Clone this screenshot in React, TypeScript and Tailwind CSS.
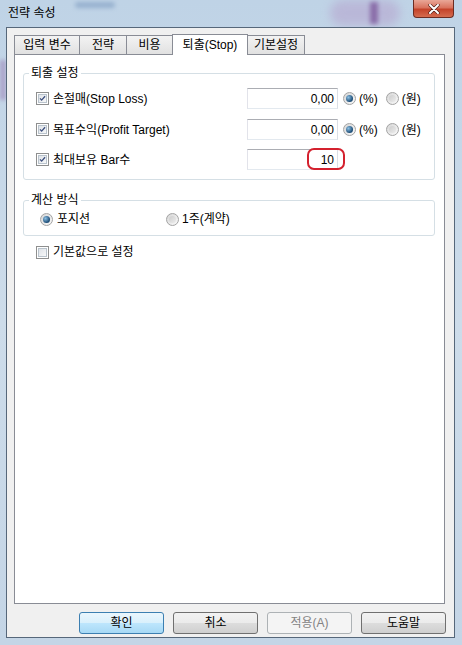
function CheckBox({ checked }: { checked?: boolean }) {
  return (
    <span className="w-[13px] h-[13px] border border-[#8e8f8f] bg-white flex items-center justify-center shrink-0">
      <span className="w-[9px] h-[9px] border border-[#b9c3cc] bg-gradient-to-br from-[#dfe3e8] to-[#f7f8f9] flex items-center justify-center">
        {checked && (
          <svg width="9" height="9" viewBox="0 0 9 9">
            <path d="M1.3 4.3 L3.4 6.6 L7.8 1.6" stroke="#3d4f7e" strokeWidth="1.7" fill="none" />
          </svg>
        )}
      </span>
    </span>
  );
}

function Radio({ checked }: { checked?: boolean }) {
  return (
    <span className="w-[13px] h-[13px] rounded-full border border-[#a3a3a3] bg-gradient-to-br from-[#d6d6d6] to-[#fafafa] flex items-center justify-center shrink-0">
      {checked ? (
        <span className="w-[7px] h-[7px] rounded-full bg-[radial-gradient(circle_at_35%_35%,#8cc0e4,#1a4a74_70%)]" />
      ) : (
        <span className="w-[7px] h-[7px] rounded-full bg-gradient-to-br from-[#cdcdcd] to-[#ececec]" />
      )}
    </span>
  );
}

function Tab({ label, width, active }: { label: string; width: string; active?: boolean }) {
  if (active) {
    return (
      <div className={`${width} h-[21px] -ml-px -mb-px relative z-10 border border-b-0 border-[#898c95] bg-white flex items-center justify-center`}>
        {label}
      </div>
    );
  }
  return (
    <div className={`${width} h-[19px] -ml-px first:ml-0 border border-b-0 border-[#898c95] bg-gradient-to-b from-[#f3f3f3] to-[#e1e1e1] flex items-center justify-center`}>
      {label}
    </div>
  );
}

function NumBox({ value }: { value: string }) {
  return (
    <div className="w-[91px] h-[21px] border border-[#abadb3] border-l-[#e2e3ea] border-b-[#e3e9ef] border-r-[#dbdfe6] bg-white flex items-center justify-end pr-[3px]">
      {value}
    </div>
  );
}

function Button({ label, focus, disabled }: { label: string; focus?: boolean; disabled?: boolean }) {
  if (disabled) {
    return (
      <div className="w-[85px] h-[22px] rounded-[3px] border border-[#adb2b5] bg-[#f4f4f4] text-[#838383] flex items-center justify-center">
        {label}
      </div>
    );
  }
  if (focus) {
    return (
      <div className="w-[85px] h-[22px] rounded-[3px] border border-[#3c7fb1] bg-[linear-gradient(#eaf6fd_0%,#d9f0fc_50%,#bee6fd_50%,#a7d9f5_100%)] flex items-center justify-center">
        {label}
      </div>
    );
  }
  return (
    <div className="w-[85px] h-[22px] rounded-[3px] border border-[#707070] bg-[linear-gradient(#f2f2f2_0%,#ebebeb_50%,#dddddd_50%,#cfcfcf_100%)] flex items-center justify-center">
      {label}
    </div>
  );
}

export default function App() {
  return (
    <div className="w-[462px] h-[645px] flex flex-col relative overflow-hidden bg-gradient-to-b from-[#bfd3e6] via-[#cddcea] to-[#c4d5e6] text-[12px] text-black font-['Liberation_Sans','Noto_Sans_CJK_KR',sans-serif] leading-[14px]">
      {/* glass smudges */}
      <div className="absolute left-[75px] top-[2px] w-[40px] h-[6px] rounded-full bg-[#6f8fb8] opacity-50 blur-[2px]" />
      <div className="absolute left-[330px] top-[0px] w-[70px] h-[26px] rounded-full bg-[#b6a6cf] opacity-60 blur-[5px]" />
      <div className="absolute left-[370px] top-[2px] w-[8px] h-[22px] bg-[#6b3d8a] opacity-60 blur-[2px]" />
      <div className="absolute left-[0px] top-[60px] w-[6px] h-[40px] bg-[#9a7fb5] opacity-60 blur-[2px]" />

      {/* Title bar */}
      <div className="h-[27px] flex items-start justify-between pl-[8px] pr-[8px] relative">
        <span className="mt-[6px]">전략 속성</span>
        <div className="w-[41px] h-[18px] rounded-b-[4px] border border-t-0 border-[#6c2c22] bg-[linear-gradient(#e9a797_0%,#d9735e_45%,#c4432a_55%,#d56c4f_100%)] flex items-center justify-center">
          <svg width="12" height="10" viewBox="0 0 12 10">
            <path d="M2 1 L10 9 M10 1 L2 9" stroke="#4a1a12" strokeWidth="3.2" strokeLinecap="round" />
            <path d="M2 1 L10 9 M10 1 L2 9" stroke="#ffffff" strokeWidth="2" strokeLinecap="round" />
          </svg>
        </div>
      </div>

      {/* Client area */}
      <div className="flex-1 ml-[6px] mr-[7px] mb-[7px] border border-[#56677a] bg-[#f0f0f0] flex flex-col pl-[7px] pr-[9px] pt-[5px] relative">
        {/* Tabs */}
        <div className="flex items-end h-[21px]">
          <Tab label="입력 변수" width="w-[66px]" />
          <Tab label="전략" width="w-[48px]" />
          <Tab label="비용" width="w-[47px]" />
          <Tab label="퇴출(Stop)" width="w-[76px]" active />
          <Tab label="기본설정" width="w-[58px]" />
        </div>

        {/* Panel */}
        <div className="flex-1 border border-[#898c95] bg-white pl-[8px] pr-[9px] pt-[11px]">
          <fieldset className="border border-[#d5dfe5] rounded-[3px] pl-[12px] pr-[8px] pt-[8px] pb-[9px]">
            <legend className="-ml-[7px] px-[2px] leading-[14px]">퇴출 설정</legend>
            <div className="flex flex-col gap-[10px]">
              <div className="flex items-center h-[21px]">
                <div className="w-[211px] flex items-center gap-[4px]">
                  <CheckBox checked />
                  <span>손절매(Stop Loss)</span>
                </div>
                <NumBox value="0,00" />
                <div className="flex items-center ml-[5px] gap-[3px]">
                  <Radio checked />
                  <span>(%)</span>
                </div>
                <div className="flex items-center ml-[8px] gap-[3px]">
                  <Radio />
                  <span>(원)</span>
                </div>
              </div>
              <div className="flex items-center h-[21px]">
                <div className="w-[211px] flex items-center gap-[4px]">
                  <CheckBox checked />
                  <span>목표수익(Profit Target)</span>
                </div>
                <NumBox value="0,00" />
                <div className="flex items-center ml-[5px] gap-[3px]">
                  <Radio checked />
                  <span>(%)</span>
                </div>
                <div className="flex items-center ml-[8px] gap-[3px]">
                  <Radio />
                  <span>(원)</span>
                </div>
              </div>
              <div className="flex items-center h-[21px] -mt-[1px]">
                <div className="w-[211px] flex items-center gap-[4px]">
                  <CheckBox checked />
                  <span>최대보유 Bar수</span>
                </div>
                <div className="relative">
                  <NumBox value="10" />
                  <div className="absolute left-[60px] top-[-1px] w-[38px] h-[22px] rounded-[7px] border-2 border-[#d4212e]" />
                </div>
              </div>
            </div>
          </fieldset>

          <fieldset className="mt-[13px] border border-[#d5dfe5] rounded-[3px] pl-[16px] pt-[4px] pb-[8px]">
            <legend className="-ml-[11px] px-[2px] leading-[14px]">계산 방식</legend>
            <div className="flex items-center h-[16px]">
              <div className="w-[126px] flex items-center gap-[4px]">
                <Radio checked />
                <span>포지션</span>
              </div>
              <div className="flex items-center gap-[3px]">
                <Radio />
                <span>1주(계약)</span>
              </div>
            </div>
          </fieldset>

          <div className="mt-[9px] ml-[13px] flex items-center gap-[4px]">
            <CheckBox />
            <span>기본값으로 설정</span>
          </div>
        </div>

        {/* Buttons */}
        <div className="flex justify-end gap-[9px] mt-[8px] mb-[3px] -mr-[1px]">
          <Button label="확인" focus />
          <Button label="취소" />
          <Button label="적용(A)" disabled />
          <Button label="도움말" />
        </div>
      </div>
    </div>
  );
}
